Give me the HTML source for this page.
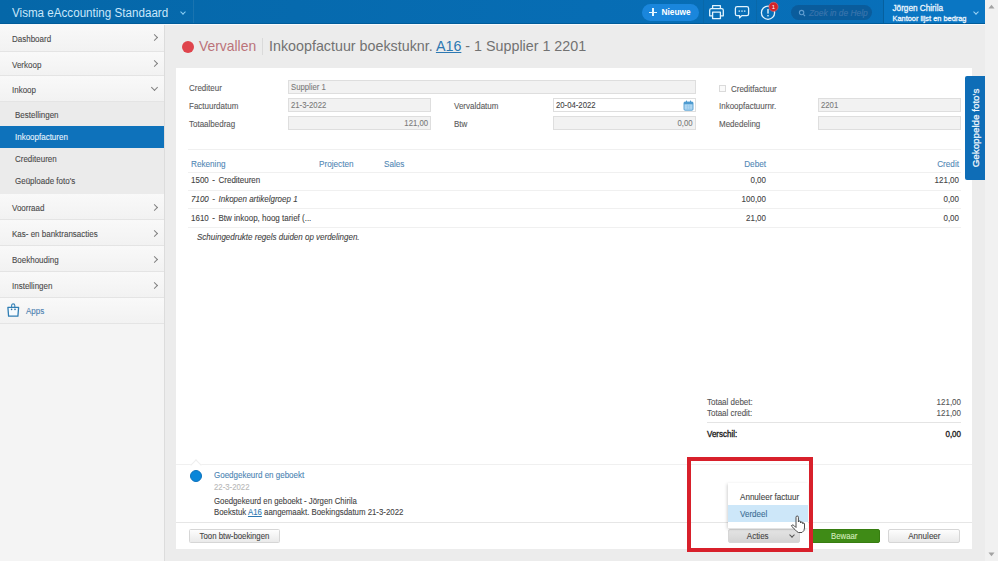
<!DOCTYPE html>
<html><head><meta charset="utf-8">
<style>
*{box-sizing:border-box;margin:0;padding:0}
html,body{width:998px;height:561px;overflow:hidden;background:#ececec;font-family:"Liberation Sans",sans-serif;color:#444}
.td,.lbl,.mi span,.si span,.th,.btn,.inp{-webkit-text-stroke:0.1px currentColor}
.abs{position:absolute}
#hdr{position:absolute;left:0;top:0;width:985px;height:24px;background:linear-gradient(90deg,#0567a8,#076db4 60%,#0870bb);border-bottom:1px solid #005c9a}
#hdr .brand{position:absolute;left:0;top:0;width:194px;height:23px;border-right:1px solid #1a74b0}
#hdr .brand span{position:absolute;left:12px;top:6.3px;font-size:12.5px;color:#c9e7fb;white-space:nowrap;transform:scaleX(0.93);transform-origin:0 0}
.chev{position:absolute;width:5px;height:5px;border-right:1px solid #cfe6f8;border-bottom:1px solid #cfe6f8;transform:rotate(45deg)}
#sb{position:absolute;left:0;top:24px;width:165px;height:537px;background:#f4f4f4;border-right:1px solid #dcdcdc}
.mi{position:absolute;left:0;width:164px;height:26px;background:linear-gradient(#f9f9f9,#f2f2f2);border-bottom:1px solid #e4e4e4;font-size:8px;color:#4a4a4a}
.mi span{position:absolute;left:12px;top:10.15px;white-space:nowrap;font-size:8.5px;transform:scaleX(.94);transform-origin:0 0}
.mi .ch{position:absolute;left:152px;top:11px;width:5px;height:5px;border-right:1.1px solid #808080;border-bottom:1.1px solid #808080;transform:rotate(-45deg)}
.mi .chd{position:absolute;left:152px;top:9px;width:5px;height:5px;border-right:1.1px solid #808080;border-bottom:1.1px solid #808080;transform:rotate(45deg)}
#sub{position:absolute;left:0;top:102px;width:164px;height:92px;background:#ebebeb}
.si{position:absolute;left:0;width:164px;height:22px;font-size:8px;color:#4a4a4a}
.si span{position:absolute;left:15px;top:5.65px;white-space:nowrap;font-size:8.5px;transform:scaleX(.94);transform-origin:0 0}
.si.sel{background:#0e72bb;color:#e8f4fd}
#card{position:absolute;left:176px;top:68px;width:796px;height:481px;background:#fff}
.lbl{position:absolute;font-size:8.5px;transform:scaleX(.94);transform-origin:0 0;color:#5a5a5a;white-space:nowrap}
.inp{position:absolute;height:14px;background:#f2f2f2;border:1px solid #dedede;font-size:8px;color:#7a7a7a;padding:2px 2.2px;white-space:nowrap}
.th{position:absolute;font-size:8.7px;transform:scaleX(.94);transform-origin:0 0;color:#5288b5;white-space:nowrap}
.td{position:absolute;font-size:8.5px;transform:scaleX(.94);transform-origin:0 0;color:#444;white-space:nowrap}
.hl{position:absolute;height:1px;background:#f0f0f0}
.r{transform-origin:100% 0 !important}
.inp .sp{display:inline-block;font-size:8.5px;transform:scaleX(.91);transform-origin:0 0;margin-top:-0.9px}
.inp .r2{transform-origin:100% 0}
.btn .bt{display:inline-block;transform:scaleX(.93);transform-origin:50% 50%}
.btn{position:absolute;height:14px;border:1px solid #d6d6d6;background:linear-gradient(#fdfdfd,#eaeaea);font-size:8.5px;color:#444;text-align:center;line-height:12px;border-radius:2px}
</style></head><body>

<div id="hdr">
  <div class="brand"><span>Visma eAccounting Standaard</span><div class="chev" style="left:181px;top:9.5px;width:4px;height:4px;border-color:#8ccff5"></div></div>
  <div class="abs" style="left:642px;top:3.5px;width:57px;height:17.5px;border-radius:9px;background:#1a86dc"></div>
  <div class="abs" style="left:649px;top:11.6px;width:8px;height:1.4px;background:#e6f6ff"></div>
  <div class="abs" style="left:652.3px;top:8.3px;width:1.4px;height:8px;background:#e6f6ff"></div>
  <div class="abs" style="left:661.5px;top:7px;font-size:8.3px;font-weight:bold;color:#fff">Nieuwe</div>
  <div class="abs" style="left:703px;top:0;width:1px;height:23px;background:#0968a9"></div><div class="abs" style="left:756px;top:0;width:1px;height:23px;background:#0968a9"></div>
  <!-- print -->
  <svg class="abs" style="left:708px;top:4px" width="17" height="16" viewBox="0 0 17 16"><g fill="none" stroke="#e2f3fd" stroke-width="1.3" stroke-linejoin="round"><path d="M4.6 4.5V1.7H12.4V4.5"/><path d="M4.2 11.8H1.7V6.3Q1.7 4.6 3.4 4.6H13.6Q15.3 4.6 15.3 6.3V11.8H12.8"/><path d="M4.6 8.2H12.4V14.6H4.6Z"/></g></svg>
  <!-- chat -->
  <svg class="abs" style="left:734px;top:5px" width="16" height="15" viewBox="0 0 16 15"><path d="M3.2 1.6H12.8Q14.6 1.6 14.6 3.4V9Q14.6 10.6 12.8 10.6H7.8L5.6 12.9V10.6H3.2Q1.4 10.6 1.4 9V3.4Q1.4 1.6 3.2 1.6Z" fill="none" stroke="#e2f3fd" stroke-width="1.3" stroke-linejoin="round"/><circle cx="5.3" cy="6.1" r="0.9" fill="#a9d6f2"/><circle cx="8" cy="6.1" r="0.9" fill="#a9d6f2"/><circle cx="10.7" cy="6.1" r="0.9" fill="#a9d6f2"/></svg>
  <!-- alert -->
  <svg class="abs" style="left:759px;top:1px" width="22" height="21" viewBox="0 0 22 21"><circle cx="9" cy="11.7" r="6.6" fill="none" stroke="#e2f3fd" stroke-width="1.3"/><rect x="8.3" y="8" width="1.4" height="4.6" fill="#e2f3fd"/><rect x="8.3" y="14" width="1.4" height="1.4" fill="#e2f3fd"/><circle cx="14.5" cy="5.8" r="4.6" fill="#d2232a" stroke="#e46a6e" stroke-width="0.6"/><text x="14.5" y="8" font-size="6" fill="#fff" text-anchor="middle" font-family="Liberation Sans">1</text></svg>
  <!-- search -->
  <div class="abs" style="left:791px;top:4.8px;width:81px;height:15.6px;border-radius:8px;background:#0a5c9c"></div>
  <svg class="abs" style="left:797.5px;top:8.5px" width="8" height="8" viewBox="0 0 8 8"><circle cx="3.6" cy="3.6" r="2.2" fill="none" stroke="#5f9cd0" stroke-width="1.1"/><path d="M5.3 5.3L7 7" stroke="#5f9cd0" stroke-width="1.2"/></svg>
  <div class="abs" style="left:809px;top:7.5px;font-size:8.4px;font-style:italic;color:#3974ac;-webkit-text-stroke:0.2px #3974ac;white-space:nowrap">Zoek in de Help</div>
  <div class="abs" style="left:883px;top:0;width:102px;height:23px;background:#0a76c3;border-left:1px solid #06609f"></div>
  <div class="abs" style="left:892.5px;top:3.5px;font-size:8.2px;-webkit-text-stroke:0.3px #eaf5fd;color:#eaf5fd;white-space:nowrap">Jörgen Chirila</div>
  <div class="abs" style="left:892.5px;top:13.8px;font-size:7.4px;-webkit-text-stroke:0.3px #eaf5fd;color:#eaf5fd;white-space:nowrap">Kantoor lijst en bedrag</div>
  <div class="chev" style="left:974px;top:10px;width:4px;height:4px;border-color:#9fd4f5"></div>
</div>

<!-- scrollbar -->
<div class="abs" style="left:985px;top:0;width:13px;height:561px;background:#f1f1f1"></div>
<svg class="abs" style="left:988px;top:4px" width="7" height="5"><path d="M0.5 4.5L3.5 0.8L6.5 4.5Z" fill="#a3a3a3"/></svg>
<svg class="abs" style="left:988px;top:552px" width="7" height="5"><path d="M0.5 0.5L3.5 4.2L6.5 0.5Z" fill="#a3a3a3"/></svg>

<div id="sb">
  <div class="mi" style="top:0;height:28px"><span>Dashboard</span><div class="ch"></div></div>
  <div class="mi" style="top:28px;height:24px"><span style="top:8.15px">Verkoop</span><div class="ch" style="top:9px"></div></div>
  <div class="mi" style="top:52px"><span style="top:8.65px">Inkoop</span><div class="chd"></div></div>
  <div id="sub" style="top:78px">
    <div class="si" style="top:2px"><span>Bestellingen</span></div>
    <div class="si sel" style="top:24px"><span>Inkoopfacturen</span></div>
    <div class="si" style="top:46px"><span>Crediteuren</span></div>
    <div class="si" style="top:68px"><span>Geüploade foto's</span></div>
  </div>
  <div class="mi" style="top:170px"><span style="top:8.65px">Voorraad</span><div class="ch"></div></div>
  <div class="mi" style="top:196px"><span style="top:8.65px">Kas- en banktransacties</span><div class="ch"></div></div>
  <div class="mi" style="top:222px"><span style="top:8.65px">Boekhouding</span><div class="ch"></div></div>
  <div class="mi" style="top:248px"><span style="top:8.65px">Instellingen</span><div class="ch"></div></div>
  <div class="mi" style="top:274px;height:26px"><span style="left:25.5px;top:8.35px;color:#4a80b0">Apps</span>
    <svg class="abs" style="left:7px;top:4.8px" width="13" height="15" viewBox="0 0 13 15"><path d="M4.6 4.2V2.6Q4.6 0.9 6.2 0.9Q7.8 0.9 7.8 2.6V4.2" fill="none" stroke="#3d86ba" stroke-width="1.1"/><path d="M0.9 4.4H11.6L10.9 13.2H1.6Z" fill="#f6fbfe" stroke="#2f7db3" stroke-width="1.3" stroke-linejoin="round"/><circle cx="4.6" cy="6.4" r="0.8" fill="#2f6fa0"/><circle cx="8" cy="6.4" r="0.8" fill="#2f6fa0"/></svg>
  </div>
</div>

<div class="abs" style="left:0;top:24px;width:985px;height:1px;background:#f8fafc"></div>
<!-- title -->
<div class="abs" style="left:181.5px;top:40.5px;width:12px;height:12px;border-radius:50%;background:#df444c"></div>
<div class="abs" style="left:199px;top:38.2px;font-size:13.9px;color:#bb737a;white-space:nowrap">Vervallen</div>
<div class="abs" style="left:262px;top:38px;width:1px;height:17px;background:#dadada"></div>
<div class="abs" style="left:269px;top:38.3px;font-size:14.3px;color:#727272;white-space:nowrap">Inkoopfactuur boekstuknr. <span style="color:#2d78b2;text-decoration:underline">A16</span> - 1 Supplier 1 2201</div>

<div id="card"></div>

<!-- form -->
<div class="lbl" style="left:189px;top:82.65px">Crediteur</div>
<div class="lbl" style="left:189px;top:100.65px">Factuurdatum</div>
<div class="lbl" style="left:189px;top:118.65px">Totaalbedrag</div>
<div class="inp" style="left:288px;top:80px;width:408px"><span class="sp">Supplier 1</span></div>
<div class="inp" style="left:288px;top:98px;width:143px"><span class="sp">21-3-2022</span></div>
<div class="inp" style="left:288px;top:116px;width:143px;text-align:right"><span class="sp r2">121,00</span></div>
<div class="lbl" style="left:454px;top:100.65px">Vervaldatum</div>
<div class="lbl" style="left:454px;top:118.65px">Btw</div>
<div class="inp" style="left:553px;top:98px;width:143px;background:#fff;color:#444"><span class="sp">20-04-2022</span></div>
<svg class="abs" style="left:683px;top:99.5px" width="11" height="11" viewBox="0 0 11 11"><rect x="1" y="2" width="9" height="8.2" rx="1" fill="#b4d9f3" stroke="#4e9bd0" stroke-width="0.9"/><rect x="1" y="2" width="9" height="2.3" fill="#4e9bd0"/><rect x="3" y="0.6" width="1" height="2.3" fill="#4e9bd0"/><rect x="7" y="0.6" width="1" height="2.3" fill="#4e9bd0"/><path d="M2.5 6.2H8.5M2.5 8.2H8.5M4.5 5V9.5M6.5 5V9.5" stroke="#8cc2e8" stroke-width="0.5"/></svg>
<div class="inp" style="left:553px;top:116px;width:143px;text-align:right"><span class="sp r2">0,00</span></div>
<div class="abs" style="left:719.3px;top:85px;width:7px;height:7px;border:1px solid #dadada;background:#fafafa"></div>
<div class="lbl" style="left:731px;top:83.65px">Creditfactuur</div>
<div class="lbl" style="left:719px;top:100.65px">Inkoopfactuurnr.</div>
<div class="lbl" style="left:719px;top:118.65px">Mededeling</div>
<div class="inp" style="left:818px;top:98px;width:143px"><span class="sp">2201</span></div>
<div class="inp" style="left:818px;top:116px;width:143px"></div>

<!-- gekoppelde tab -->
<div class="abs" style="left:965px;top:75.5px;width:20px;height:104.5px;background:#0e6db7;border-radius:2px 0 0 2px"></div>
<div class="abs" style="left:975.3px;top:128px;transform:translate(-50%,-50%) rotate(-90deg);font-size:9.8px;-webkit-text-stroke:0.25px #f4f9fd;color:#f4f9fd;white-space:nowrap">Gekoppelde foto's</div>

<!-- table -->
<div class="hl" style="left:188px;top:149px;width:773px"></div>
<div class="th" style="left:191px;top:158.8px">Rekening</div>
<div class="th" style="left:319px;top:158.8px">Projecten</div>
<div class="th" style="left:384px;top:158.8px">Sales</div>
<div class="th r" style="left:706px;top:158.8px;width:60px;text-align:right">Debet</div>
<div class="th r" style="left:899px;top:158.8px;width:60px;text-align:right">Credit</div>
<div class="hl" style="left:188px;top:171.5px;width:773px"></div>
<div class="td" style="left:191px;top:175.45px;word-spacing:1.4px">1500 - Crediteuren</div>
<div class="td r" style="left:726px;top:175.45px;width:40px;text-align:right">0,00</div>
<div class="td r" style="left:919px;top:175.45px;width:40px;text-align:right">121,00</div>
<div class="hl" style="left:188px;top:190px;width:773px"></div>
<div class="td" style="left:191px;top:194.35px;font-style:italic"><span style="word-spacing:1.4px">7100 - </span>Inkopen artikelgroep 1</div>
<div class="td r" style="left:726px;top:194.35px;width:40px;text-align:right">100,00</div>
<div class="td r" style="left:919px;top:194.35px;width:40px;text-align:right">0,00</div>
<div class="hl" style="left:188px;top:208px;width:773px"></div>
<div class="td" style="left:191px;top:213.05px"><span style="word-spacing:1.4px">1610 - </span>Btw inkoop, hoog tarief (...</div>
<div class="td r" style="left:726px;top:213.05px;width:40px;text-align:right">21,00</div>
<div class="td r" style="left:919px;top:213.05px;width:40px;text-align:right">0,00</div>
<div class="hl" style="left:188px;top:227px;width:773px"></div>
<div class="td" style="left:197px;top:231.65px;font-style:italic">Schuingedrukte regels duiden op verdelingen.</div>

<!-- totals -->
<div class="td" style="left:707px;top:396.9px;font-size:8.50px;color:#555">Totaal debet:</div>
<div class="td r" style="left:900px;top:396.9px;width:61px;text-align:right;font-size:8.50px;color:#555">121,00</div>
<div class="td" style="left:707px;top:407.9px;font-size:8.50px;color:#555">Totaal credit:</div>
<div class="td r" style="left:900px;top:407.9px;width:61px;text-align:right;font-size:8.50px;color:#555">121,00</div>
<div class="hl" style="left:707px;top:422px;width:254px;background:#e4e4e4"></div>
<div class="td" style="left:707px;top:428.65px;font-size:8.50px;-webkit-text-stroke:0.35px #222;color:#222">Verschil:</div>
<div class="td r" style="left:900px;top:428.65px;width:61px;text-align:right;font-size:8.50px;-webkit-text-stroke:0.35px #222;color:#222">0,00</div>

<!-- timeline -->
<div class="hl" style="left:176px;top:464px;width:796px"></div>
<div class="abs" style="left:192px;top:460.5px;width:8px;height:8px;background:#fff;border-left:1px solid #eee;border-top:1px solid #eee;transform:rotate(45deg)"></div>
<div class="abs" style="left:190px;top:470px;width:12px;height:12px;border-radius:50%;background:#0a86d9;border:0.8px solid #0b72bd"></div>
<div class="td" style="left:214px;top:470.2px;color:#4a84b3">Goedgekeurd en geboekt</div>
<div class="td" style="left:214px;top:481.9px;color:#b8b8b8;font-size:8.29px">22-3-2022</div>
<div class="td" style="left:214px;top:495.65px;font-size:8.29px">Goedgekeurd en geboekt - Jörgen Chirila</div>
<div class="td" style="left:214px;top:506.65px;font-size:8.34px">Boekstuk <span style="color:#2d78b2;text-decoration:underline">A16</span> aangemaakt. Boekingsdatum 21-3-2022</div>

<!-- footer -->
<div class="hl" style="left:176px;top:521.5px;width:796px;background:#e6e6e6"></div>
<div class="btn" style="left:188.5px;top:529px;width:91.5px;font-size:8.4px;border-radius:1.5px"><span class="bt">Toon btw-boekingen</span></div>
<div class="btn" style="left:727.5px;top:529px;width:72.5px;background:linear-gradient(#e4e4e4,#d4d4d4);padding-right:12px;font-size:8.6px;line-height:13.5px"><span class="bt">Acties</span></div>
<div class="abs" style="left:789.5px;top:533px;width:4px;height:4px;border-right:1.1px solid #555;border-bottom:1.1px solid #555;transform:rotate(45deg)"></div>
<div class="btn" style="left:811px;top:529px;width:69px;background:#3f8b16;border-color:#377d10;color:#d6edbf;font-size:8.4px;padding-right:2px;line-height:13.5px"><span class="bt">Bewaar</span></div>
<div class="btn" style="left:888px;top:529px;width:72px;font-size:8.7px"><span class="bt">Annuleer</span></div>

<!-- dropdown -->
<div class="abs" style="left:728px;top:483px;width:80px;height:45px;background:#fff;box-shadow:-1px 1px 3px rgba(0,0,0,.18)"></div>
<div class="abs" style="left:728px;top:505px;width:80px;height:17px;background:#cde7f9"></div>
<div class="td" style="left:740px;top:491.65px;font-size:8.61px">Annuleer factuur</div>
<div class="td" style="left:740px;top:508.65px;font-size:8.61px;color:#3d6e95">Verdeel</div>

<!-- cursor -->
<svg class="abs" style="left:789.5px;top:515px" width="16" height="19" viewBox="0 0 16 19"><path d="M6 11V2.3Q6 1 7.2 1Q8.4 1 8.4 2.3V7Q8.4 6 9.5 6Q10.6 6 10.6 7V8Q10.6 7 11.7 7Q12.8 7 12.8 8V8.8Q12.8 8 13.6 8Q14.5 8 14.5 9V13Q14.5 16 12 17.5H8.5Q7 17.2 5 14.5L1.8 11.5Q1 10.5 2 10Q3 9.6 4.5 11L6 12.5Z" fill="#fff" stroke="#3a3a3a" stroke-width="0.9" stroke-linejoin="round"/></svg>

<!-- red box -->
<div class="abs" style="left:687px;top:457px;width:126px;height:95px;border:4px solid #d8202b"></div>

</body></html>
